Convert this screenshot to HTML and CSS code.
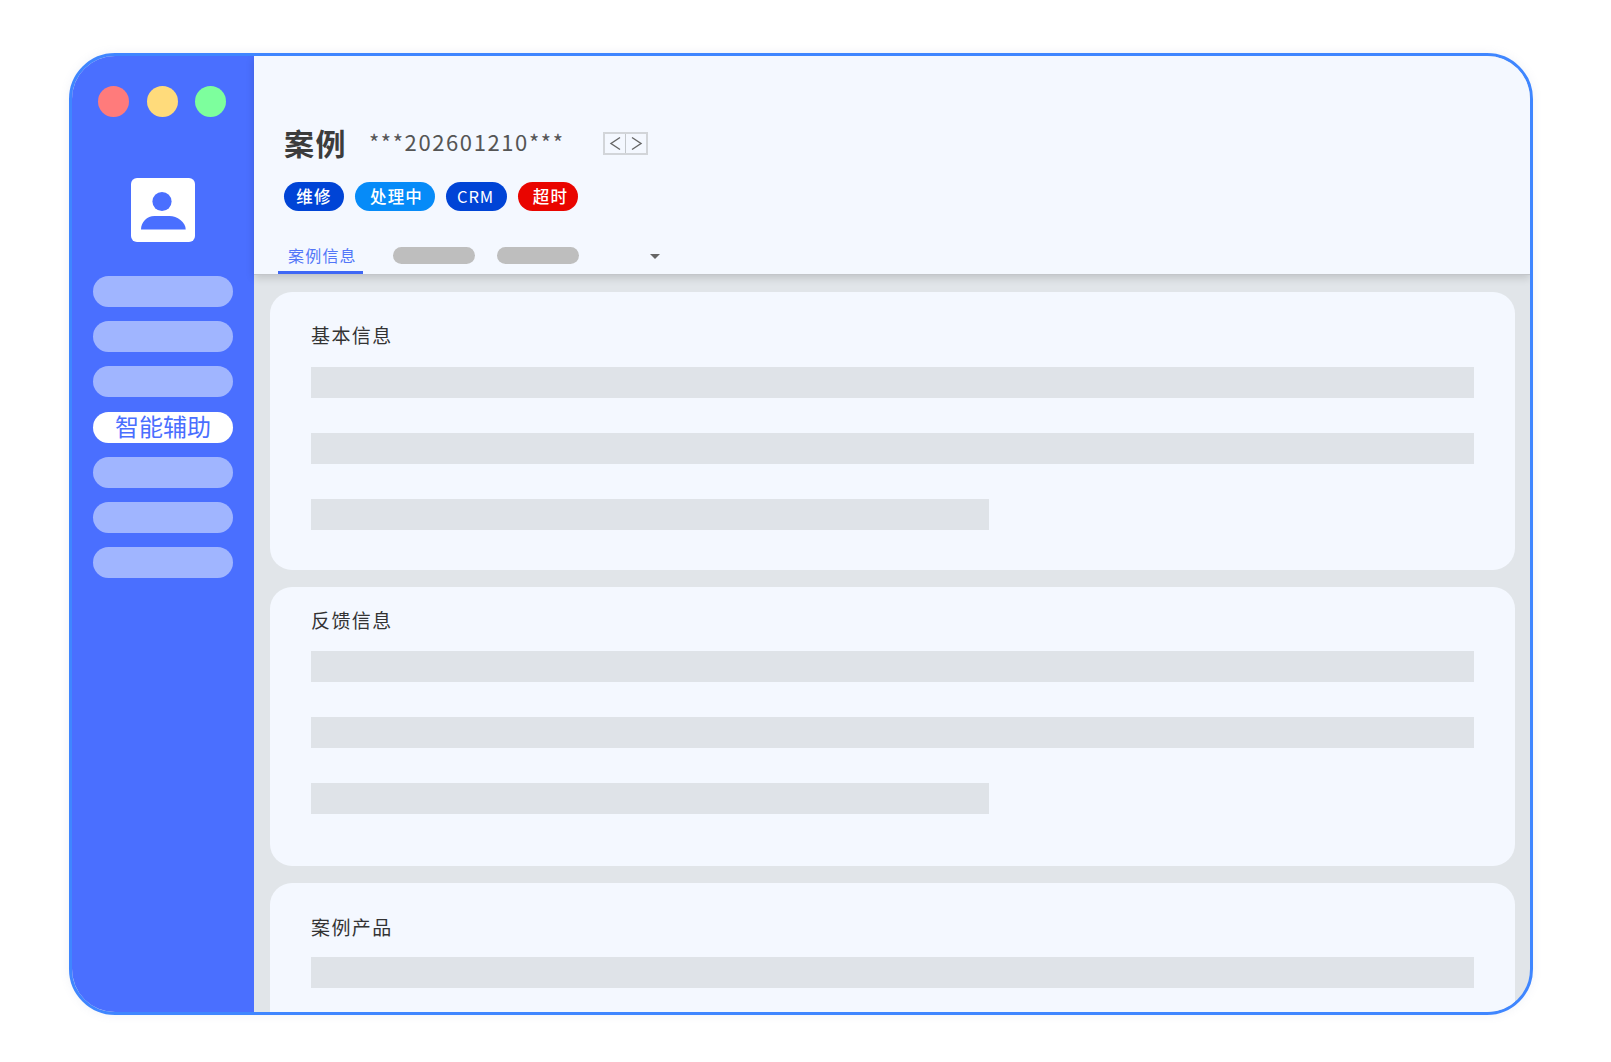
FILE: index.html
```html
<!DOCTYPE html>
<html lang="zh-CN">
<head>
<meta charset="utf-8">
<title>案例</title>
<link rel="stylesheet" href="styles.css">
</head>
<body>
<div class="window">
  <aside class="sidebar">
    <div class="dots">
      <span class="dot dot-red"></span>
      <span class="dot dot-yellow"></span>
      <span class="dot dot-green"></span>
    </div>
    <div class="avatar">
      <svg viewBox="0 0 64 64" width="64" height="64" aria-hidden="true">
        <circle cx="31" cy="23.5" r="9.6" fill="#4a6fff"/>
        <path d="M10 51.5C10 44 16 38 23.5 38h15C46 38 54.7 44 54.7 51.5Z" fill="#4a6fff"/>
      </svg>
    </div>
    <nav class="menu">
      <span class="pill"></span>
      <span class="pill"></span>
      <span class="pill"></span>
      <span class="pill pill-active">智能辅助</span>
      <span class="pill"></span>
      <span class="pill"></span>
      <span class="pill"></span>
    </nav>
  </aside>
  <main class="main">
    <header class="header">
      <div class="title-row">
        <h1 class="title">案例</h1>
        <span class="case-no">***202601210***</span>
        <div class="pager">
          <span class="pager-cell">
            <svg viewBox="0 0 21 19" width="21" height="19" aria-hidden="true"><path d="M15 3.5 6 9.5 15 15.500" fill="none" stroke="#666" stroke-width="1.4"/></svg>
          </span>
          <span class="pager-cell">
            <svg viewBox="0 0 21 19" width="21" height="19" aria-hidden="true"><path d="M6 3.5 15 9.5 6 15.500" fill="none" stroke="#666" stroke-width="1.4"/></svg>
          </span>
        </div>
      </div>
      <div class="tags">
        <span class="tag tag-navy">维修</span>
        <span class="tag tag-sky">处理中</span>
        <span class="tag tag-navy tag-crm">CRM</span>
        <span class="tag tag-red">超时</span>
      </div>
      <div class="tabs">
        <span class="tab-active">案例信息</span>
        <span class="tab-ghost tab-ghost-first"></span>
        <span class="tab-ghost"></span>
        <span class="caret"></span>
      </div>
    </header>
    <div class="content">
      <section class="card card-one">
        <h2 class="card-title">基本信息</h2>
        <div class="bars">
          <div class="bar"></div>
          <div class="bar"></div>
          <div class="bar bar-short"></div>
        </div>
      </section>
      <section class="card card-two">
        <h2 class="card-title">反馈信息</h2>
        <div class="bars">
          <div class="bar"></div>
          <div class="bar"></div>
          <div class="bar bar-short"></div>
        </div>
      </section>
      <section class="card card-three">
        <h2 class="card-title">案例产品</h2>
        <div class="bars">
          <div class="bar"></div>
        </div>
      </section>
    </div>
  </main>
</div>
</body>
</html>
```
FILE: styles.css
```css
* { box-sizing: border-box; }

html, body { margin: 0; height: 100%; background: #fff; overflow: hidden; }

body {
  padding: 53px 0 0 69px;
  font-family: "Noto Sans CJK SC", "Noto Sans", sans-serif;
}

.window {
  display: flex;
  width: 1464px;
  height: 962px;
  border: 3px solid #3f86ff;
  border-radius: 46px;
  overflow: hidden;
  background: #e1e5e9;
  box-shadow: 0 0 10px rgba(120, 140, 180, .12);
}

/* sidebar */
.sidebar {
  flex: 0 0 182px;
  display: flex;
  flex-direction: column;
  align-items: center;
  background: #4a6fff;
  padding-top: 30px;
}

.dots { display: flex; gap: 18.3px; align-self: flex-start; margin-left: 26px; }
.dot { width: 31px; height: 31px; border-radius: 50%; }
.dot-red { background: #ff7b7b; }
.dot-yellow { background: #ffdb7b; margin-right: -1.6px; }
.dot-green { background: #7dff9d; }

.avatar {
  width: 64px;
  height: 64px;
  margin-top: 61px;
  background: #fff;
  border-radius: 6px;
}
.avatar svg { display: block; }

.menu { display: flex; flex-direction: column; gap: 14.2px; margin-top: 34px; }

.pill {
  display: block;
  width: 140px;
  height: 31px;
  border-radius: 16px;
  background: #a0b5ff;
}
.pill-active {
  background: #fff;
  color: #4a6fff;
  font-size: 24px;
  line-height: 27px;
  text-align: center;
}

/* main */
.main { flex: 1; min-width: 0; display: flex; flex-direction: column; }

.header {
  position: relative;
  z-index: 1;
  height: 219px;
  flex: none;
  padding: 67px 0 0 24px;
  background: #f4f8ff;
  border-bottom: 1px solid #c3c6ca;
  box-shadow: 0 3px 8px rgba(0, 0, 0, .15);
}

.title-row { display: flex; align-items: center; height: 40px; padding-left: 6px; }

.title {
  margin: 0 0 3px;
  font-size: 30px;
  font-weight: 700;
  letter-spacing: 1.5px;
  line-height: 40px;
  color: #3c3c3c;
}

.case-no {
  margin: 0 0 5px 22px;
  font-size: 22px;
  letter-spacing: 1.6px;
  color: #555;
}

.pager { display: flex; margin-left: 38px; border: 2px solid #d2d5d9; height: 23px; }
.pager-cell { display: block; width: 20.5px; }
.pager-cell svg { display: block; }
.pager-cell + .pager-cell { border-left: 1px solid #c4c8cc; }

.tags { display: flex; gap: 11px; margin-top: 19px; padding-left: 6px; }

.tag {
  display: block;
  width: 60px;
  height: 29px;
  border-radius: 15px;
  color: #fff;
  font-size: 16.500px;
  font-weight: 500;
  letter-spacing: 1.2px;
  line-height: 29px;
  text-align: center;
}
.tag-navy { background: #0044d6; }
.tag-crm { width: 61px; padding-right: 2px; letter-spacing: .8px; font-weight: 400; }
.tag-sky { background: #068bf8; width: 80px; padding-left: 3px; }
.tag-red { background: #e90500; padding-left: 5px; }

.tabs { position: relative; display: flex; align-items: center; height: 36px; margin-top: 27px; }

.tab-active {
  width: 85px;
  height: 36px;
  padding-left: 10px;
  border-bottom: 3px solid #3f67f5;
  color: #5276f8;
  font-size: 16px;
  letter-spacing: 1.2px;
  line-height: 34px;
}

.tab-ghost {
  width: 82px;
  height: 17px;
  margin-left: 22px;
  margin-bottom: 1px;
  border-radius: 9px;
  background: #bebebe;
}
.tab-ghost-first { margin-left: 30px; }

.caret {
  width: 0;
  height: 0;
  margin-left: 71px;
  margin-bottom: -1px;
  border-left: 5px solid transparent;
  border-right: 5px solid transparent;
  border-top: 5px solid #666;
}

.content {
  flex: 1;
  min-height: 0;
  overflow: hidden;
  display: flex;
  flex-direction: column;
  gap: 17px;
  padding: 17px 15px 0 16px;
}

.card {
  flex: none;
  height: 278px;
  padding-left: 41px;
  padding-right: 41px;
  background: #f4f8ff;
  border-radius: 22px;
}
.card-one { padding-top: 30px; }
.card-two { padding-top: 19.5px; height: 279px; }
.card-three { padding-top: 31px; height: 200px; }

.card-title {
  margin: 0;
  height: 26px;
  font-size: 19px;
  font-weight: 400;
  letter-spacing: 1.4px;
  line-height: 26px;
  color: #333;
}

.bars { display: flex; flex-direction: column; gap: 35px; margin-top: 19px; }
.card-two .bars { margin-top: 18.5px; }
.card-three .bars { margin-top: 17px; }

.bar { height: 31px; background: #dfe3e8; }
.bar-short { width: 678px; }
```
